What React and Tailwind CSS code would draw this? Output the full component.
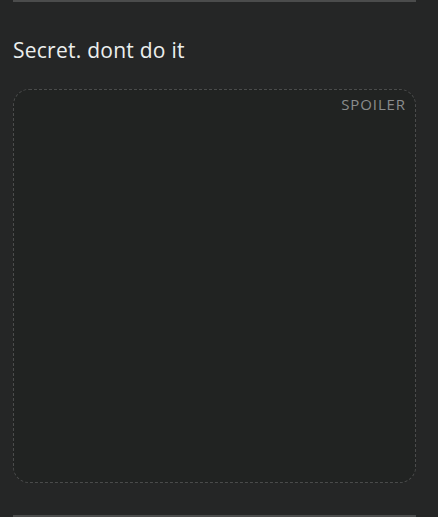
export default function App() {
  return (
    <div className="min-h-[517px] w-[438px] bg-[#252626] flex" style={{ fontFamily: "'Open Sans', Lato, sans-serif" }}>
      <div className="ml-[13px] w-[403px] flex flex-col">
        <div className="h-[2px] bg-[#4b4c4c]" />
        <h2 className="mt-[34px] text-[21px] leading-[28px] tracking-[0.25px] text-[#ecefee]">Secret. dont do it</h2>
        <div className="mt-[25px] h-[394px] rounded-[16px] border border-dashed border-[#4a4b4b] bg-[#212322] flex flex-col items-end pt-[4px] pr-[9px]">
          <span className="text-[15px] leading-[20px] tracking-[0.9px] text-[#8a8c8c]">SPOILER</span>
        </div>
        <div className="mt-auto h-[2px] bg-[#4b4c4c]" />
      </div>
    </div>
  );
}
